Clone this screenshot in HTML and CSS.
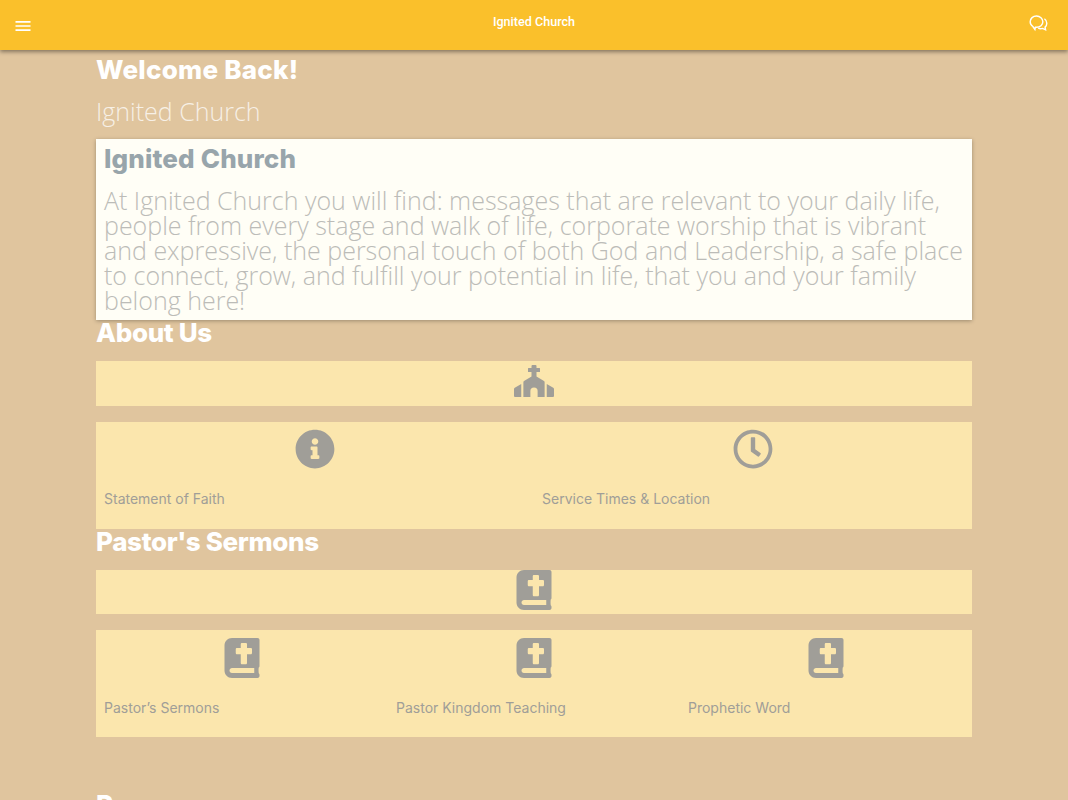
FILE: index.html
```html
<!DOCTYPE html>
<html>
<head>
	<title>Ignited Church</title>
	<link rel="stylesheet" href="styles.css">
</head>
<body>
	<header class="toolbar">
		<svg class="menuIcon" viewBox="0 0 24 24"><path d="M3 18h18v-2H3v2zm0-5h18v-2H3v2zm0-7v2h18V6H3z"/></svg>
		<div class="toolbarTitle">Ignited Church</div>
		<svg class="chatIcon" viewBox="0 0 24 24"><path d="M9.500 2.500c-4.400 0-8 3.200-8 7.300 0 2.500 1.300 4.700 3.400 6l2.600 3.700.6-2.800c.5.100.9.100 1.400.1 4.400 0 8-3.100 8-7s-3.600-7.300-8-7.300z"/><path d="M19.500 6c1.900 1.300 3 3.300 3 5.600 0 2-.8 3.700-2.200 5l.6 3.400-3.800-1.800c-1.800.5-3.800.4-5.500-.3"/></svg>
	</header>

	<main class="content">
		<h1 class="heading welcomeHeading">Welcome Back!</h1>
		<div class="subheading">Ignited Church</div>

		<section class="card">
			<h2 class="cardTitle">Ignited Church</h2>
			<p class="cardText">At Ignited Church you will find: messages that are relevant to your daily life, people from every stage and walk of life, corporate worship that is vibrant and expressive, the personal touch of both God and Leadership, a safe place to connect, grow, and fulfill your potential in life, that you and your family belong here!</p>
		</section>

		<h1 class="heading sectionHeading">About Us</h1>
		<div class="band">
			<svg class="icon" viewBox="0 0 640 512"><path d="M296 0h48a16 16 0 0 1 16 16v32h48a8 8 0 0 1 8 8v48a8 8 0 0 1-8 8h-48v70l120 72c6 4 10 12 10 20V512H378V416a58 58 0 0 0-116 0v96H150V274c0-8 4-16 10-20l120-72V112h-48a8 8 0 0 1-8-8V56a8 8 0 0 1 8-8h48V16a16 16 0 0 1 16-16zM0 384c0-10 6-16 12-20L116 304V512H16a16 16 0 0 1-16-16zM640 384c0-10-6-16-12-20L524 304V512h100a16 16 0 0 0 16-16z"/></svg>
		</div>
		<div class="grid grid2">
			<a class="tile">
				<svg class="icon" viewBox="0 0 512 512"><path d="M256 8C119.043 8 8 119.083 8 256c0 136.997 111.043 248 248 248s248-111.003 248-248C504 119.083 392.957 8 256 8zm0 110c23.196 0 42 18.804 42 42s-18.804 42-42 42-42-18.804-42-42 18.804-42 42-42zm56 254c0 6.627-5.373 12-12 12h-88c-6.627 0-12-5.373-12-12v-24c0-6.627 5.373-12 12-12h12v-64h-12c-6.627 0-12-5.373-12-12v-24c0-6.627 5.373-12 12-12h64c6.627 0 12 5.373 12 12v100h12c6.627 0 12 5.373 12 12v24z"/></svg>
				<span class="tileLabel">Statement of Faith</span>
			</a>
			<a class="tile">
				<svg class="icon" viewBox="0 0 512 512"><path d="M256 8C119 8 8 119 8 256s111 248 248 248 248-111 248-248S393 8 256 8zm0 448c-110.500 0-200-89.500-200-200S145.500 56 256 56s200 89.500 200 200-89.500 200-200 200zm61.800-104.400l-84.900-61.700c-3.100-2.300-4.900-5.900-4.900-9.700V116c0-6.600 5.400-12 12-12h32c6.600 0 12 5.400 12 12v141.700l66.800 48.600c5.400 3.900 6.500 11.400 2.600 16.800L334.600 349c-3.900 5.300-11.400 6.500-16.800 2.600z"/></svg>
				<span class="tileLabel">Service Times &amp; Location</span>
			</a>
		</div>

		<h1 class="heading sectionHeading">Pastor's Sermons</h1>
		<div class="band">
			<svg class="icon" viewBox="0 0 448 512"><path d="M448 358.400V25.600c0-16-9.600-25.600-25.600-25.600H96C41.600 0 0 41.600 0 96v320c0 54.400 41.600 96 96 96h326.400c12.800 0 25.600-9.600 25.600-25.600v-16c0-6.400-3.200-12.800-9.600-19.200-3.200-16-3.200-60.800 0-73.600 6.400-3.200 9.600-9.600 9.600-19.200zM144 144c0-8.840 7.160-16 16-16h48V80c0-8.840 7.160-16 16-16h48c8.840 0 16 7.160 16 16v48h48c8.840 0 16 7.160 16 16v48c0 8.840-7.160 16-16 16h-48v112c0 8.840-7.160 16-16 16h-48c-8.840 0-16-7.160-16-16V208h-48c-8.840 0-16-7.160-16-16v-48zm236.800 304H96c-19.200 0-32-12.800-32-32s16-32 32-32h284.800v64z"/></svg>
		</div>
		<div class="grid grid3">
			<a class="tile">
				<svg class="icon" viewBox="0 0 448 512"><path d="M448 358.400V25.600c0-16-9.600-25.600-25.600-25.600H96C41.600 0 0 41.600 0 96v320c0 54.400 41.600 96 96 96h326.400c12.800 0 25.600-9.600 25.600-25.600v-16c0-6.400-3.200-12.800-9.600-19.200-3.200-16-3.200-60.800 0-73.600 6.400-3.200 9.600-9.600 9.600-19.200zM144 144c0-8.840 7.160-16 16-16h48V80c0-8.840 7.160-16 16-16h48c8.840 0 16 7.160 16 16v48h48c8.840 0 16 7.160 16 16v48c0 8.840-7.160 16-16 16h-48v112c0 8.840-7.160 16-16 16h-48c-8.840 0-16-7.160-16-16V208h-48c-8.840 0-16-7.160-16-16v-48zm236.800 304H96c-19.200 0-32-12.800-32-32s16-32 32-32h284.800v64z"/></svg>
				<span class="tileLabel">Pastor’s Sermons</span>
			</a>
			<a class="tile">
				<svg class="icon" viewBox="0 0 448 512"><path d="M448 358.400V25.600c0-16-9.600-25.600-25.600-25.600H96C41.600 0 0 41.600 0 96v320c0 54.400 41.600 96 96 96h326.400c12.800 0 25.600-9.600 25.600-25.600v-16c0-6.400-3.200-12.800-9.600-19.200-3.200-16-3.200-60.800 0-73.600 6.400-3.200 9.600-9.600 9.600-19.200zM144 144c0-8.840 7.160-16 16-16h48V80c0-8.840 7.160-16 16-16h48c8.840 0 16 7.160 16 16v48h48c8.840 0 16 7.160 16 16v48c0 8.840-7.160 16-16 16h-48v112c0 8.840-7.160 16-16 16h-48c-8.840 0-16-7.160-16-16V208h-48c-8.840 0-16-7.160-16-16v-48zm236.800 304H96c-19.200 0-32-12.800-32-32s16-32 32-32h284.800v64z"/></svg>
				<span class="tileLabel">Pastor Kingdom Teaching</span>
			</a>
			<a class="tile">
				<svg class="icon" viewBox="0 0 448 512"><path d="M448 358.400V25.600c0-16-9.600-25.600-25.600-25.600H96C41.600 0 0 41.600 0 96v320c0 54.400 41.600 96 96 96h326.400c12.800 0 25.600-9.600 25.600-25.600v-16c0-6.400-3.200-12.800-9.600-19.200-3.200-16-3.200-60.800 0-73.600 6.400-3.200 9.600-9.600 9.600-19.200zM144 144c0-8.840 7.160-16 16-16h48V80c0-8.840 7.160-16 16-16h48c8.840 0 16 7.160 16 16v48h48c8.840 0 16 7.160 16 16v48c0 8.840-7.160 16-16 16h-48v112c0 8.840-7.160 16-16 16h-48c-8.840 0-16-7.160-16-16V208h-48c-8.840 0-16-7.160-16-16v-48zm236.800 304H96c-19.200 0-32-12.800-32-32s16-32 32-32h284.800v64z"/></svg>
				<span class="tileLabel">Prophetic Word</span>
			</a>
		</div>

		<h1 class="heading resourcesHeading">Resources</h1>
	</main>
</body>
</html>
```

FILE: styles.css
```css
html, body {
	height: 100%;
}
body {
	margin: 0;
	background: #e0c59e;
	font-family: "Open Sans", "Liberation Sans", sans-serif;
	overflow: hidden;
}

.toolbar {
	display: grid;
	grid-template-columns: 1fr auto 1fr;
	align-items: center;
	height: 50px;
	padding: 0 12px 4px;
	box-sizing: border-box;
	background: #fac02b;
	box-shadow: 0 2px 4px rgba(0, 0, 0, .4);
	position: relative;
}
.toolbarTitle {
	color: #fff;
	font-family: Roboto, sans-serif;
	font-size: 12.600px;
	font-weight: 500;
	margin-bottom: 4px;
}
.menuIcon {
	width: 20px;
	height: 20px;
	fill: #fff;
	margin: 5px 0 0 .5px;
}
.chatIcon {
	justify-self: end;
	width: 19px;
	height: 19px;
	margin-right: 8px;
	fill: none;
	stroke: #fff;
	stroke-width: 1.800;
}

.content {
	padding: 0 96px;
}

.heading {
	margin: 0;
	color: #fff;
	font-family: Inter, sans-serif;
	font-size: 26px;
	font-weight: 800;
	line-height: 40px;
}
.welcomeHeading {
	letter-spacing: .25px;
}
.subheading {
	color: rgba(255, 255, 255, .75);
	font-size: 25px;
	font-weight: 300;
	line-height: 42px;
}

.card {
	margin-top: 7px;
	padding: 0 8px 7px;
	background: #fffef6;
	box-shadow: 0 1px 4px rgba(0, 0, 0, .3);
}
.cardTitle {
	margin: 0;
	color: #98a5ab;
	font-family: Inter, sans-serif;
	font-size: 26px;
	font-weight: 800;
	letter-spacing: .15px;
	line-height: 40px;
}
.cardText {
	margin: 9px 0 0;
	color: #bcbcb8;
	font-size: 25px;
	font-weight: 300;
	line-height: 25px;
}

.sectionHeading {
	line-height: 25px;
	padding-bottom: 16px;
	letter-spacing: -.35px;
}

.band {
	display: flex;
	justify-content: center;
	height: 44.600px;
	background: #fbe6ad;
}
.icon {
	display: block;
	height: 40px;
	width: 40px;
	fill: #a09e98;
}

.grid {
	display: grid;
	margin-top: 16px;
	height: 107px;
	background: #fbe6ad;
}
.grid2 {
	grid-template-columns: repeat(2, 1fr);
}
.grid3 {
	grid-template-columns: repeat(3, 1fr);
}
.tile {
	display: flex;
	flex-direction: column;
	padding: 7.400px 8px 8px;
}
.tile .icon {
	align-self: center;
}
.tileLabel {
	margin-top: 20px;
	color: #a09e98;
	font-family: Inter, sans-serif;
	font-size: 14px;
	line-height: 20px;
}

.resourcesHeading {
	margin-top: 48px;
}
```
